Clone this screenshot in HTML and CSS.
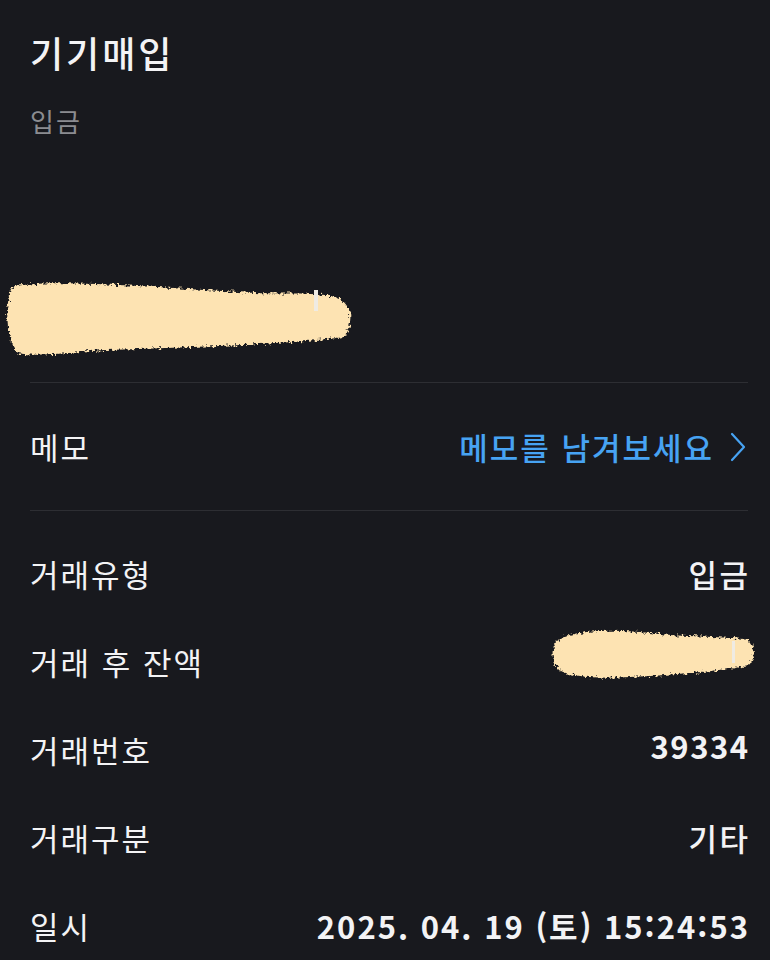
FILE: index.html
```html
<!DOCTYPE html>
<html lang="ko">
<head>
<meta charset="utf-8">
<title>기기매입</title>
<link rel="stylesheet" href="styles.css">
</head>
<body>
<div class="page">
  <header class="head">
    <h1 class="title">기기매입</h1>
    <div class="subtitle">입금</div>
    <div class="amount">
      <svg class="blob1" width="352" height="82" viewBox="0 0 352 82">
        <defs>
          <filter id="rough" x="-5%" y="-20%" width="110%" height="140%">
            <feTurbulence type="fractalNoise" baseFrequency="0.35" numOctaves="2" seed="3" result="n"/>
            <feDisplacementMap in="SourceGraphic" in2="n" scale="7" xChannelSelector="R" yChannelSelector="G"/>
          </filter>
        </defs>
        <path filter="url(#rough)" fill="#fde3b2" d="M8,10 C40,2 120,8 250,16 C290,17 322,15 336,22 C348,30 350,44 340,60 C300,66 200,70 100,73 C60,76 30,80 14,76 C2,64 0,26 8,10 Z"/>
        <rect x="310" y="13" width="4" height="21" fill="#efebe3"/>
      </svg>
    </div>
  </header>
  <div class="divider"></div>
  <div class="row memo-row">
    <span class="label">메모</span>
    <span class="memo-link">메모를 남겨보세요
      <svg class="chev" width="16" height="32" viewBox="0 0 16 32"><polyline points="2,3 14,16 2,29" fill="none" stroke="#47a3f3" stroke-width="2.2" stroke-linecap="round" stroke-linejoin="round"/></svg>
    </span>
  </div>
  <div class="divider"></div>
  <section class="details">
    <div class="row drow">
      <span class="label">거래유형</span>
      <span class="value">입금</span>
    </div>
    <div class="row drow">
      <span class="label">거래 후 잔액</span>
      <span class="value blob-wrap">
        <svg class="blob2" width="208" height="58" viewBox="0 0 208 58">
          <path filter="url(#rough)" fill="#fde3b2" d="M6,16 C22,5 60,3 110,9 C150,13 180,11 198,15 C206,21 206,34 198,41 C170,46 120,50 80,52 C50,54 20,52 9,45 C1,37 1,24 6,16 Z"/>
          <rect x="182" y="16" width="3" height="22" fill="#efebe3"/>
        </svg>
      </span>
    </div>
    <div class="row drow">
      <span class="label">거래번호</span>
      <span class="value num id up">39334</span>
    </div>
    <div class="row drow">
      <span class="label">거래구분</span>
      <span class="value">기타</span>
    </div>
    <div class="row drow">
      <span class="label">일시</span>
      <span class="value num date">2025. 04. 19 (토) 15:24:53</span>
    </div>
  </section>
</div>
</body>
</html>
```
FILE: styles.css
```css
html, body {
  margin: 0;
  padding: 0;
  background: #18191e;
}
body {
  font-family: "Noto Sans CJK KR", "Noto Sans", sans-serif;
  color: #f3f3f5;
  width: 770px;
  height: 960px;
  overflow: hidden;
}
.page {
  padding: 0 22px 0 30px;
}
.head {
  display: flex;
  flex-direction: column;
}
.title {
  margin: 30px 0 0 0;
  font-size: 36px;
  line-height: 44px;
  font-weight: 500;
  letter-spacing: 3px;
}
.subtitle {
  margin-top: 29px;
  font-size: 26px;
  line-height: 36px;
  color: #8b8c91;
  letter-spacing: 2px;
}
.amount {
  margin: 138px 0 0 -26px;
  height: 105px;
}
.blob1 {
  display: block;
}
.divider {
  height: 1px;
  background: #2d2e33;
}
.row {
  display: flex;
  justify-content: space-between;
  align-items: center;
}
.memo-row {
  height: 127px;
}
.label {
  font-size: 31px;
  line-height: 40px;
  letter-spacing: 2px;
}
.memo-link {
  display: flex;
  align-items: center;
  gap: 16px;
  color: #47a3f3;
  font-size: 31px;
  line-height: 40px;
  font-weight: 500;
  letter-spacing: 2px;
}
.chev {
  display: block;
  margin-right: 2px;
}
.details {
  padding-top: 19px;
}
.drow {
  height: 88px;
}
.value {
  font-size: 31px;
  line-height: 40px;
  font-weight: 500;
  letter-spacing: 2.5px;
  margin-right: -2.5px;
}
.num {
  font-weight: 600;
}
.id {
  letter-spacing: 1.5px;
  margin-right: -1.5px;
}
.date {
  letter-spacing: 2px;
  margin-right: -2px;
}
.up {
  align-self: flex-start;
  margin-top: 20px;
}
.blob-wrap {
  align-self: flex-start;
  margin: 7px -10px 0 0;
  height: 58px;
}
.blob2 {
  display: block;
}
```
